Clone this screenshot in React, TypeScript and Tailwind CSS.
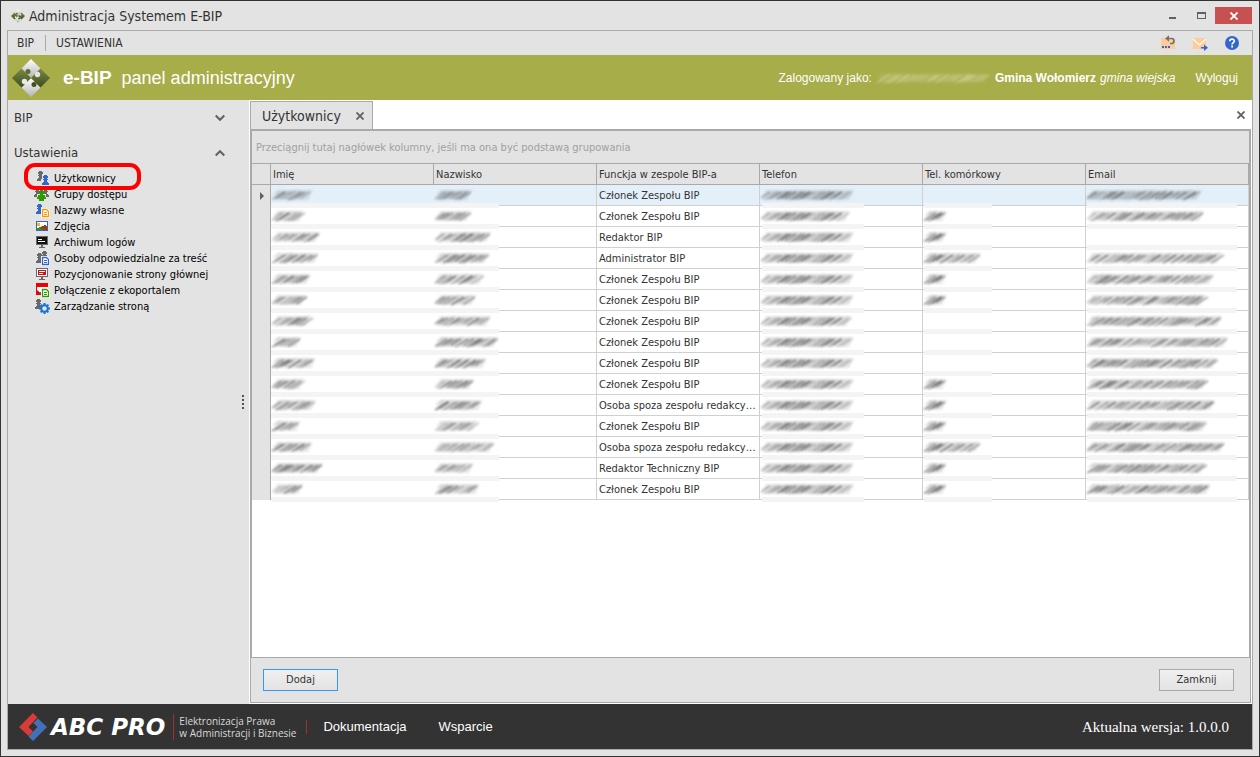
import type { ReactNode } from 'react'

type Row = {
  first: number
  last: number
  role: string
  phone: number
  mobile: number
  email: number
}

const MEMBER = 'Członek Zespołu BIP'
const OUTSIDE = 'Osoba spoza zespołu redakcy…'

// personal data is scribbled over, only the width of each entry is kept
const ROWS: Row[] = [
  { first: 42, last: 38, role: MEMBER, phone: 94, mobile: 0, email: 116 },
  { first: 33, last: 37, role: MEMBER, phone: 90, mobile: 24, email: 118 },
  { first: 49, last: 57, role: 'Redaktor BIP', phone: 94, mobile: 24, email: 0 },
  { first: 48, last: 55, role: 'Administrator BIP', phone: 94, mobile: 57, email: 136 },
  { first: 40, last: 50, role: MEMBER, phone: 94, mobile: 24, email: 128 },
  { first: 35, last: 42, role: MEMBER, phone: 94, mobile: 24, email: 119 },
  { first: 40, last: 57, role: MEMBER, phone: 91, mobile: 0, email: 136 },
  { first: 30, last: 64, role: MEMBER, phone: 94, mobile: 0, email: 142 },
  { first: 45, last: 53, role: MEMBER, phone: 94, mobile: 0, email: 131 },
  { first: 33, last: 40, role: MEMBER, phone: 94, mobile: 24, email: 121 },
  { first: 45, last: 49, role: OUTSIDE, phone: 94, mobile: 24, email: 129 },
  { first: 30, last: 43, role: MEMBER, phone: 94, mobile: 24, email: 121 },
  { first: 42, last: 60, role: OUTSIDE, phone: 94, mobile: 57, email: 139 },
  { first: 51, last: 40, role: 'Redaktor Techniczny BIP', phone: 94, mobile: 24, email: 119 },
  { first: 32, last: 46, role: MEMBER, phone: 94, mobile: 24, email: 125 },
]

const HEADERS = ['Imię', 'Nazwisko', 'Funckja w zespole BIP-a', 'Telefon', 'Tel. komórkowy', 'Email']

function Scribble({ width, seed, color = '#4b4b4b' }: { width: number; seed: number; color?: string }) {
  if (width === 0) return null
  const strokes: ReactNode[] = []
  let s = seed * 7919 + 13
  for (let x = 0; x < width - 10; x += 4) {
    s = (s * 1103 + 12345) % 65536
    const a = (s % 5) - 2
    const o = 0.25 + (s % 7) / 16
    strokes.push(
      <path key={x} d={`M${x} ${12 + a / 2}l${11 + a} ${-7 - a / 2}`} stroke={color} strokeWidth="1.500" opacity={o} />,
      <path key={`b${x}`} d={`M${x + 1} ${8 - a / 2}l8 -4`} stroke={color} strokeWidth="1" opacity={o / 2} />,
    )
  }
  return (
    <svg width={width} height="16" viewBox={`0 0 ${width} 16`} className="block shrink-0 overflow-visible blur-[0.9px]" aria-hidden="true">
      <path d={`M1 13L5 3H${width - 1}L${width - 6} 13z`} fill={color} opacity="0.13" />
      {strokes}
    </svg>
  )
}

function HiddenCell({ width, seed, smear }: { width: number; seed: number; smear: string }) {
  return (
    <td className="relative h-[21px] border-r border-b border-[#d0d0d0] p-0 pl-px align-middle">
      <span className={`absolute -bottom-[3px] left-0 h-[5px] bg-[#f4f4f4] ${smear}`} />
      <Scribble width={width} seed={seed} />
    </td>
  )
}

function Pawn({ x, y, fill }: { x: number; y: number; fill: string }) {
  return (
    <path
      fill={fill}
      d={`M${x + 2} ${y}h3v1h1v2h-1v1h1v1h-1v2h1v1h1v2h-7v-2h1v-1h1v-2h-1v-1h1v-1h-1v-2h1z`}
    />
  )
}

function Doc({ stroke }: { stroke: string }) {
  return (
    <>
      <path d="M7 6h6l3 3v7h-9z" fill="#fff" />
      <path d="M8.500 7.500h4l2 2v5h-6z" fill="#fff" stroke={stroke} strokeWidth="1.300" />
      <path d="M10 10.500h3M10 12.500h3" stroke={stroke} />
    </>
  )
}

const GRAY = '#696969'
const BLUE = '#3366cc'

const MENU: { label: string; icon: ReactNode }[] = [
  {
    label: 'Użytkownicy',
    icon: (
      <>
        <Pawn x={3} y={1} fill={GRAY} />
        <path d="M8 4h6v5h2v6H7V9h1z" fill="#e3e3e3" />
        <Pawn x={8} y={5} fill={BLUE} />
      </>
    ),
  },
  {
    label: 'Grupy dostępu',
    icon: (
      <>
        <Pawn x={0} y={1} fill={GRAY} />
        <Pawn x={8} y={1} fill={GRAY} />
        <path d="M5 3h5v5h2v7H3V8h2z" fill="#e3e3e3" />
        <path d="M6 4h3v1h1v3H9v1h2v2h1v2h-2v2H5v-2H3v-2h1V9h2V8H5V5h1z" fill="#2f9a00" />
      </>
    ),
  },
  {
    label: 'Nazwy własne',
    icon: (
      <>
        <Pawn x={2} y={2} fill={BLUE} />
        <Doc stroke="#ff9900" />
      </>
    ),
  },
  {
    label: 'Zdjęcia',
    icon: (
      <>
        <path d="M2 3h12v10H2z" fill={BLUE} />
        <path d="M3 4h10v8H3z" fill="#fff" />
        <path d="M3 5h3v3H3z" fill="#ffb020" />
        <path d="M3 10h2V9h4v3H3z" fill="#2f9a00" />
        <path d="M6 10l2-2h2V7h2v1h1v4H9z" fill="#9c3a12" />
      </>
    ),
  },
  {
    label: 'Archiwum logów',
    icon: (
      <>
        <path d="M2 2h12v9H2zM7 11h2v2h2v1H5v-1h2z" fill={GRAY} />
        <path d="M3 3h10v7H3z" fill="#111" />
        <path d="M4 5h4v1H4zM4 7h7v1H4z" fill="#fff" />
      </>
    ),
  },
  {
    label: 'Osoby odpowiedzialne za treść',
    icon: (
      <>
        <Pawn x={2} y={3} fill={GRAY} />
        <Pawn x={7} y={1} fill={GRAY} />
        <Doc stroke={BLUE} />
      </>
    ),
  },
  {
    label: 'Pozycjonowanie strony głównej',
    icon: (
      <>
        <path d="M2 2h12v9H2zM7 11h2v2h2v1H5v-1h2z" fill={GRAY} />
        <path d="M3 3h10v7H3z" fill="#fff" />
        <path d="M4 4h8v5H4z" fill="#d01010" />
        <path d="M5 5h6v1H5zM5 7h4v1H5z" fill="#fff" />
      </>
    ),
  },
  {
    label: 'Połączenie z ekoportalem',
    icon: (
      <>
        <path d="M2 1h12v12H2z" fill="#f00000" />
        <path d="M3 5h11v8H9L3 8z" fill="#fff" />
        <path d="M5 11l3-2v4z" fill={BLUE} />
        <Doc stroke="#2f9a00" />
      </>
    ),
  },
  {
    label: 'Zarządzanie stroną',
    icon: (
      <>
        <Pawn x={1} y={1} fill={GRAY} />
        <circle cx="10.500" cy="10.500" r="3.300" fill="#e3e3e3" stroke="#1874d0" strokeWidth="2" />
        <path
          d="M10.500 5v2M10.500 14v2M5 10.500h2M14 10.500h2M6.600 6.600l1.400 1.400M13 13l1.400 1.400M6.600 14.400L8 13M13 8l1.400-1.400"
          stroke="#1874d0"
          strokeWidth="2"
        />
      </>
    ),
  },
]

function PuzzleLogo({ size }: { size: number }) {
  return (
    <svg width={size} height={size} viewBox="0 0 38 38" aria-hidden="true">
      <defs>
        <linearGradient id="silver" x1="0" y1="0" x2="0" y2="1">
          <stop offset="0" stopColor="#ffffff" />
          <stop offset="1" stopColor="#b4b4b4" />
        </linearGradient>
        <linearGradient id="moss" x1="0" y1="0" x2="0" y2="1">
          <stop offset="0" stopColor="#7a8a45" />
          <stop offset="1" stopColor="#3c4d1e" />
        </linearGradient>
      </defs>
      <path d="M19 0l9.500 9.500L19 19 9.500 9.500z" fill="url(#silver)" />
      <path d="M19 19l9.500 9.500L19 38l-9.500-9.500z" fill="url(#silver)" />
      <path d="M9.500 9.500L19 19l-9.500 9.500L0 19z" fill="url(#moss)" />
      <path d="M28.500 9.500L38 19l-9.500 9.500L19 19z" fill="url(#moss)" />
      <circle cx="16" cy="12.500" r="2.500" fill="#5b6c30" />
      <circle cx="25.500" cy="15.500" r="2.700" fill="#e2e2e2" />
      <circle cx="22" cy="25.500" r="2.500" fill="#42531f" />
      <circle cx="12.500" cy="22.500" r="2.700" fill="#e8e8e8" />
    </svg>
  )
}

function Chevron({ up = false }: { up?: boolean }) {
  return (
    <svg width="10" height="8" viewBox="0 0 10 8" fill="none" stroke="#606060" strokeWidth="2" aria-hidden="true">
      <path d={up ? 'M0.700 6.500L5 2.200l4.300 4.300' : 'M0.700 1.500L5 5.800l4.300-4.300'} />
    </svg>
  )
}

function Cross({ color, size }: { color: string; size: number }) {
  return (
    <svg width={size} height={size} viewBox="0 0 8 8" stroke={color} strokeWidth="1.800" aria-hidden="true">
      <path d="M0.500 0.500l7 7M7.500 0.500l-7 7" />
    </svg>
  )
}

function TitleBar() {
  return (
    <header className="flex h-[29px] shrink-0 items-center pl-[10px]">
      <PuzzleLogo size={14} />
      <h1 className="ml-1 text-[14px] leading-5">Administracja Systemem E-BIP</h1>
      <div className="ml-auto flex items-center pr-[7px]">
        <button aria-label="Minimalizuj" className="flex h-[17px] w-7 items-center justify-center">
          <svg width="8" height="8" aria-hidden="true"><path d="M0 5h7v2H0z" fill="#606060" /></svg>
        </button>
        <button aria-label="Maksymalizuj" className="flex h-[17px] w-7 items-center justify-center">
          <svg width="9" height="8" aria-hidden="true"><path d="M0 0h9v7H0zM1 2v4h7V2z" fill="#606060" fillRule="evenodd" /></svg>
        </button>
        <button aria-label="Zamknij okno" className="flex h-[17px] w-[37px] items-center justify-center bg-[#c75050]">
          <Cross color="#fff" size={8} />
        </button>
      </div>
    </header>
  )
}

function MenuBar() {
  return (
    <nav className="flex h-6 shrink-0 items-center pr-3 pl-[9px] text-[12px] leading-4">
      <button>BIP</button>
      <span className="mr-[10px] ml-[11px] h-4 w-px bg-[#a9a9a9]" />
      <button>USTAWIENIA</button>
      <div className="ml-auto flex gap-4">
        <button aria-label="Cofnij wysyłkę">
          <svg width="16" height="16" viewBox="0 0 16 16" aria-hidden="true">
            <path d="M1 3h14v11H1z" fill="#ffcc99" />
            <path d="M2 11h2v2H2zM5 11h2v2H5zM8 11h2v2H8z" fill={BLUE} />
            <path d="M7 3.500h4.500a2.500 2.500 0 010 5H10" fill="none" stroke="#737373" strokeWidth="1.700" />
            <path d="M5 3.500l4-3.200v6.400z" fill="#737373" />
          </svg>
        </button>
        <button aria-label="Wyślij wiadomość">
          <svg width="16" height="16" viewBox="0 0 16 16" aria-hidden="true">
            <path d="M1 3h13v11H1z" fill="#ffcc99" />
            <path d="M1 4l6.500 6L14 4" fill="none" stroke="#fff" strokeWidth="1.200" />
            <path d="M9 12h3V9.500l4 3.200-4 3.200v-2.400H9z" fill={BLUE} />
          </svg>
        </button>
        <button aria-label="Pomoc">
          <svg width="16" height="16" viewBox="0 0 16 16" aria-hidden="true">
            <circle cx="8" cy="8" r="7" fill={BLUE} />
            <path d="M5.800 6.300c0-3 4.500-2.800 4.500-.3 0 1.700-2.200 1.600-2.200 3.400" fill="none" stroke="#fff" strokeWidth="1.700" />
            <path d="M7.200 10.600h1.800v1.800H7.200z" fill="#fff" />
          </svg>
        </button>
      </div>
    </nav>
  )
}

function Banner() {
  return (
    <div className="flex h-[45px] shrink-0 items-center bg-[#a7ad49] pr-[14px] pl-1 font-['Liberation_Sans',Arial,sans-serif] text-white">
      <PuzzleLogo size={38} />
      <p className="ml-[13px] text-[18px] leading-6">
        <strong className="mr-[10px] text-[19px]">e-BIP</strong>
        panel administracyjny
      </p>
      <div className="ml-auto flex items-center text-[12px] leading-4">
        <span className="mr-1">Zalogowany jako:</span>
        <span className="opacity-60"><Scribble width={115} seed={4} color="#f1f3dc" /></span>
        <strong className="ml-1">Gmina Wołomierz</strong>
        <em className="ml-1">gmina wiejska</em>
        <a href="#wyloguj" className="ml-5">Wyloguj</a>
      </div>
    </div>
  )
}

function Sidebar() {
  return (
    <aside className="flex w-[241px] shrink-0">
      <div className="w-[229px]">
        <button className="flex h-[35px] w-full items-center justify-between pr-3 pl-[6px] text-[13px]">
          BIP
          <Chevron />
        </button>
        <button className="flex h-[35px] w-full items-center justify-between pr-3 pl-[6px] text-[13px]">
          Ustawienia
          <Chevron up />
        </button>
        <ul className="pl-[26px] text-[11px] leading-4 text-black">
          {MENU.map((item, i) => (
            <li key={item.label} className="relative">
              <a href={`#menu-${i}`} className="flex h-4 items-center gap-1 whitespace-nowrap">
                <svg width="16" height="16" viewBox="0 0 16 16" fill="none" className="shrink-0" aria-hidden="true">
                  {item.icon}
                </svg>
                <span className="pt-[2px]">{item.label}</span>
              </a>
              {i === 0 && (
                <span className="pointer-events-none absolute -top-[7px] -left-[10px] z-10 h-[27px] w-[117px] rounded-[11px] border-4 border-[#ff0000]" />
              )}
            </li>
          ))}
        </ul>
      </div>
      <div className="flex flex-1 items-center justify-center">
        <svg width="3" height="15" fill="#505050" aria-hidden="true">
          <path d="M0 0h2v2H0zM0 4h2v2H0zM0 8h2v2H0zM0 12h2v2H0z" />
        </svg>
      </div>
    </aside>
  )
}

function UsersTable() {
  return (
    <table className="w-full table-fixed border-separate border-spacing-0 text-[11px] leading-4">
      <colgroup>
        <col className="w-[19px]" />
        {HEADERS.map(h => <col key={h} />)}
      </colgroup>
      <thead>
        <tr className="bg-[#e3e3e3]">
          <td className="h-[22px] border-y border-r border-[#a9a9a9] p-0" />
          {HEADERS.map(h => (
            <th key={h} scope="col" className="h-[22px] border-y border-r border-[#a9a9a9] p-0 pt-[2px] pl-[2px] text-left font-normal">
              {h}
            </th>
          ))}
        </tr>
      </thead>
      <tbody>
        {ROWS.map((r, i) => (
          <tr key={i} className={i === 0 ? 'bg-[#e3f0fa]' : 'bg-white'}>
            <td className="h-[21px] border-r border-[#a9a9a9] bg-[#e3e3e3] p-0">
              {i === 0 && (
                <svg width="5" height="8" className="ml-2" aria-hidden="true"><path d="M0 0l4 4-4 4z" fill="#606060" /></svg>
              )}
            </td>
            <td className="relative h-[21px] border-b border-[#d0d0d0] p-0 pl-px">
              <span className="absolute -bottom-[3px] left-0 h-[5px] w-full bg-[#f4f4f4]" />
              <Scribble width={r.first} seed={i + 1} />
            </td>
            <HiddenCell width={r.last} seed={i + 21} smear="w-[65px]" />
            <td className="h-[21px] truncate border-r border-b border-[#d0d0d0] p-0 pt-[2px] pl-[2px]">{r.role}</td>
            <HiddenCell width={r.phone} seed={7} smear="ml-[2px] w-[102px]" />
            <HiddenCell width={r.mobile} seed={9} smear="ml-px w-[68px]" />
            <HiddenCell width={r.email} seed={i + 61} smear="ml-px w-[150px]" />
          </tr>
        ))}
      </tbody>
    </table>
  )
}

function Workspace() {
  return (
    <main className="flex min-w-0 flex-1 flex-col border-x border-b border-white bg-white">
      <div className="flex h-[29px] shrink-0 items-end">
        <div className="flex h-7 w-[123px] items-center border border-b-0 border-[#a9a9a9] bg-[#e3e3e3] pl-[11px] text-[14px] leading-5">
          Użytkownicy
          <button aria-label="Zamknij kartę" className="mr-2 ml-auto"><Cross color="#606060" size={8} /></button>
        </div>
        <button aria-label="Zamknij widok" className="mr-[6px] mb-[10px] ml-auto"><Cross color="#606060" size={8} /></button>
      </div>
      <section className="flex flex-1 flex-col border border-t-2 border-[#a9a9a9] bg-[#e3e3e3]">
        <div className="flex flex-1 flex-col border-r border-b border-l border-[#a9a9a9] bg-white">
          <p className="bg-[#e3e3e3] pt-[9px] pb-[7px] pl-1 text-[11px] leading-4 text-[#a0a0a0]">
            Przeciągnij tutaj nagłówek kolumny, jeśli ma ona być podstawą grupowania
          </p>
          <UsersTable />
        </div>
        <div className="flex h-11 shrink-0 items-center justify-between pr-4 pl-3 text-[11px]">
          <button className="h-[22px] w-[75px] border border-[#3399ff] bg-linear-to-b from-[#f0f0f0] to-[#e3e3e3]">Dodaj</button>
          <button className="h-[22px] w-[75px] border border-[#a9a9a9] bg-linear-to-b from-[#f0f0f0] to-[#e3e3e3]">Zamknij</button>
        </div>
      </section>
    </main>
  )
}

function Footer() {
  return (
    <footer className="flex h-[45px] shrink-0 items-center bg-[#333333] pr-[23px] pl-[11px] font-['Liberation_Sans',Arial,sans-serif] text-white">
      <svg width="28" height="28" viewBox="0 0 28 28" aria-hidden="true">
        <path d="M14 0l4.500 4.500-9 9.500 4.500 4.500-4.500 4.500L0 14z" fill="#d93a3a" />
        <path d="M19 5.500L28 14 14 28l-4.500-4.500 9-9.500-4-4z" fill="#4470b8" />
      </svg>
      <span className="ml-1 font-['DejaVu_Sans',sans-serif] text-[23px] leading-7 font-bold whitespace-nowrap italic">ABC PRO</span>
      <p className="ml-2 border-l border-[#a03030] py-px pl-[5px] font-['Open_Sans',sans-serif] text-[10px] leading-[12px] whitespace-nowrap text-[#d8d8d8]">
        Elektronizacja Prawa
        <br />w Administracji i Biznesie
      </p>
      <span className="ml-[10px] h-[14px] w-px bg-[#a03030]" />
      <nav className="ml-4 flex gap-8 text-[13px] leading-4">
        <a href="#dokumentacja">Dokumentacja</a>
        <a href="#wsparcie">Wsparcie</a>
      </nav>
      <p className="ml-auto font-['Liberation_Serif','Times_New_Roman',serif] text-[15px] leading-5">Aktualna wersja: 1.0.0.0</p>
    </footer>
  )
}

export default function App() {
  return (
    <div className="flex min-h-screen flex-col border border-[#333333] bg-[#e3e3e3] font-[Tahoma,'DejaVu_Sans_Condensed',sans-serif] text-[#333333]">
      <TitleBar />
      <div className="mx-[6px] mb-[6px] flex flex-1 flex-col border border-[#a9a9a9]">
        <MenuBar />
        <Banner />
        <div className="flex flex-1">
          <Sidebar />
          <Workspace />
        </div>
        <Footer />
      </div>
    </div>
  )
}
